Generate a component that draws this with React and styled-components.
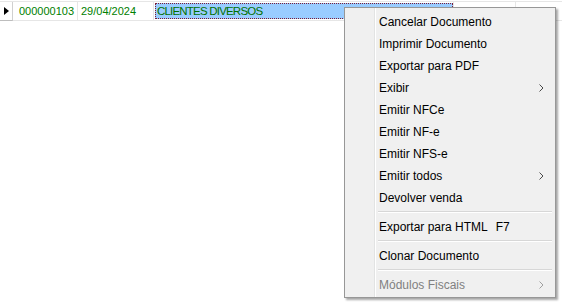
import React from 'react';
import styled, { createGlobalStyle } from 'styled-components';

const GlobalStyle = createGlobalStyle`
  html, body {
    margin: 0;
    padding: 0;
    background: #ffffff;
  }
  body {
    font-family: "Liberation Sans", Arial, sans-serif;
  }
`;

const Page = styled.div`
  position: relative;
  width: 562px;
  height: 306px;
  overflow: hidden;
  background: #fff;
`;

const Grid = styled.div`
  margin-top: 1px;
  border-top: 1px solid #e6e6e6;
  display: flex;
  height: 18px;
  border-bottom: 1px solid #e6e6e6;
`;

const Cell = styled.div`
  box-sizing: border-box;
  width: ${p => p.$w}px;
  flex: none;
  border-right: 1px solid #e6e6e6;
  display: flex;
  align-items: center;
  padding-left: ${p => p.$pad || 0}px;
  font-size: 11px;
  color: #008000;
  white-space: nowrap;
`;

const Indicator = styled(Cell)`
  border-right-color: #d0d0d0;
  border-bottom: 1px solid #bdbdbd;
  margin-bottom: -1px;
  padding-left: 4px;
`;

const Arrow = styled.span`
  width: 0;
  height: 0;
  border-top: 4px solid transparent;
  border-bottom: 4px solid transparent;
  border-left: 5px solid #000;
`;

const SelectedCell = styled(Cell)`
  padding: 1px 0 1px 1px;
  align-items: stretch;
`;

const Selection = styled.div`
  flex: 1;
  background: #99ccff;
  outline: 1px dotted #7a1f3a;
  outline-offset: -1px;
  display: flex;
  align-items: center;
  padding-left: 2px;
  font-size: 11.5px;
  letter-spacing: -0.8px;
  color: #007000;
`;

const Menu = styled.div`
  position: absolute;
  left: 344px;
  top: 7px;
  width: 212px;
  box-sizing: border-box;
  border: 1px solid #979797;
  padding: 2px;
  background-color: #f0f0f0;
  background-image: linear-gradient(
    to right,
    transparent 29px,
    #e2e3e3 29px,
    #e2e3e3 30px,
    #ffffff 30px,
    #ffffff 31px,
    transparent 31px
  );
  box-shadow: 2px 2px 2px rgba(0, 0, 0, 0.35);
  font-family: "Liberation Sans", Arial, sans-serif;
  font-size: 12px;
`;

const Item = styled.div`
  box-sizing: border-box;
  height: 22px;
  display: flex;
  align-items: center;
  padding: 1px 9px 0 32px;
  color: ${p => (p.$disabled ? '#808080' : '#000')};
`;

const Label = styled.span`
  flex: 1;
  white-space: nowrap;
`;

const Shortcut = styled.span`
  margin-left: 8px;
`;

const Separator = styled.div`
  height: 7px;
  margin: 0 1px 0 31px;
  display: flex;
  align-items: center;
  &::after {
    content: '';
    flex: 1;
    height: 1px;
    background: #d7d7d7;
    border-bottom: 1px solid #fff;
  }
`;

const Chevron = ({ disabled }) => (
  <svg width="5" height="8" viewBox="0 0 5 8">
    <polyline
      points="0.5,0.5 4,4 0.5,7.5"
      fill="none"
      stroke={disabled ? '#a0a0a0' : '#4a4a4a'}
      strokeWidth="1"
    />
  </svg>
);

const menu = [
  { label: 'Cancelar Documento' },
  { label: 'Imprimir Documento' },
  { label: 'Exportar para PDF' },
  { label: 'Exibir', sub: true },
  { label: 'Emitir NFCe' },
  { label: 'Emitir NF-e' },
  { label: 'Emitir NFS-e' },
  { label: 'Emitir todos', sub: true },
  { label: 'Devolver venda' },
  { sep: true },
  { label: 'Exportar para HTML', shortcut: 'F7' },
  { sep: true },
  { label: 'Clonar Documento' },
  { sep: true },
  { label: 'Módulos Fiscais', sub: true, disabled: true },
];

export default function App() {
  return (
    <Page>
      <GlobalStyle />
      <Grid>
        <Indicator $w={13}>
          <Arrow />
        </Indicator>
        <Cell $w={65} $pad={6}>000000103</Cell>
        <Cell $w={76} $pad={3}>29/04/2024</Cell>
        <SelectedCell $w={300}>
          <Selection>CLIENTES DIVERSOS</Selection>
        </SelectedCell>
        <Cell $w={62} />
        <Cell $w={60} />
      </Grid>
      <Menu>
        {menu.map((m, i) =>
          m.sep ? (
            <Separator key={i} />
          ) : (
            <Item key={i} $disabled={m.disabled}>
              <Label>
                {m.label}
                {m.shortcut && <Shortcut>{m.shortcut}</Shortcut>}
              </Label>
              {m.sub && <Chevron disabled={m.disabled} />}
            </Item>
          )
        )}
      </Menu>
    </Page>
  );
}
